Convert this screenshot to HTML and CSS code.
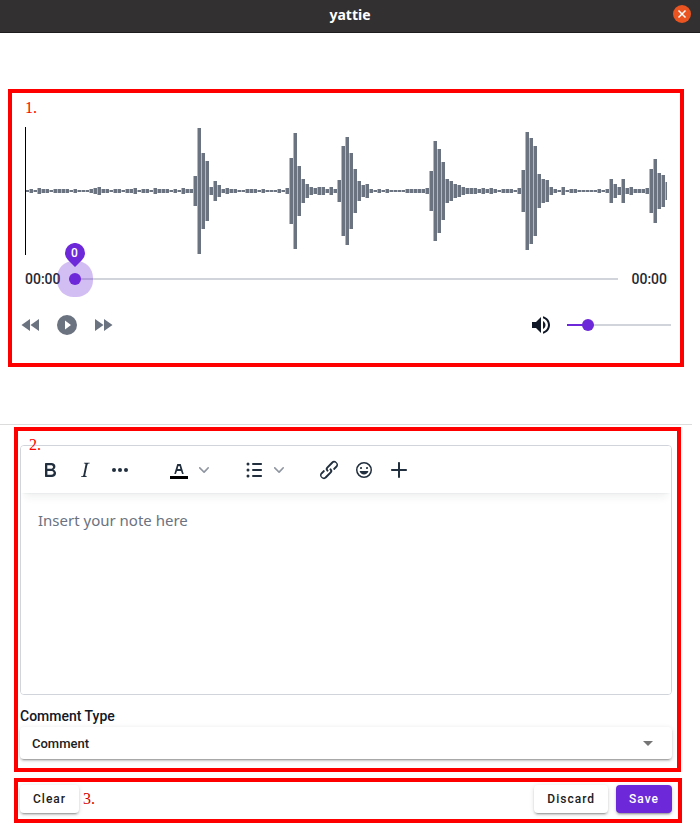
FILE: index.html
```html
<!DOCTYPE html>
<html lang="en">
<head>
<meta charset="utf-8">
<meta name="viewport" content="width=device-width, initial-scale=1">
<title>yattie</title>
<link rel="stylesheet" href="styles.css">
</head>
<body>
<header class="titlebar">
  <h1 class="titlebar-name">yattie</h1>
  <button class="titlebar-close" type="button" aria-label="Close window">
    <svg viewBox="0 0 18 18" width="18" height="18"><path d="M5.500 5.500l7 7M12.500 5.500l-7 7" fill="none" stroke="#fff" stroke-width="1.500"/></svg>
  </button>
</header>
<main class="content">
  <section class="region player" aria-label="Audio player">
    <div class="marker">1.</div>
    <svg class="wave" viewBox="0 0 642 128" preserveAspectRatio="none" aria-hidden="true"></svg>
    <div class="timeline">
      <span class="time">00:00</span>
      <div class="seek">
        <input class="range seek-range" id="seek" type="range" min="0" max="100" value="0" aria-label="Position">
        <output class="pin" for="seek">
          <svg class="pin-shape" viewBox="0 0 20 24" width="20" height="24" aria-hidden="true"><path d="M10 24L3 17.100A10 10 0 1 1 17 17.100Z"/></svg>
          <span class="pin-value">0</span>
        </output>
      </div>
      <span class="time">00:00</span>
    </div>
    <div class="controls">
      <button class="icon-button" type="button" aria-label="Rewind"><svg viewBox="0 0 24 24"><path d="M11.500 12L20 18V6M11 18V6L2.500 12L11 18Z"/></svg></button>
      <button class="icon-button" type="button" aria-label="Play"><svg viewBox="0 0 24 24"><path d="M10 16.500V7.500L16 12M12 2A10 10 0 0 0 2 12A10 10 0 0 0 12 22A10 10 0 0 0 22 12A10 10 0 0 0 12 2Z"/></svg></button>
      <button class="icon-button" type="button" aria-label="Fast forward"><svg viewBox="0 0 24 24"><path d="M13 6V18L21.500 12M4 18L12.500 12L4 6V18Z"/></svg></button>
      <div class="volume">
        <button class="icon-button icon-dark" type="button" aria-label="Mute"><svg viewBox="0 0 24 24"><path d="M14 3.230V5.290C16.890 6.150 19 8.830 19 12C19 15.170 16.890 17.840 14 18.700V20.770C18 19.860 21 16.280 21 12C21 7.720 18 4.140 14 3.230M16.500 12C16.500 10.230 15.500 8.710 14 7.970V16C15.500 15.290 16.500 13.760 16.500 12M3 9V15H7L12 20V4L7 9H3Z"/></svg></button>
        <input class="range volume-range" type="range" min="0" max="100" value="16" aria-label="Volume">
      </div>
    </div>
  </section>

  <hr class="divider">

  <section class="region note" aria-label="Note">
    <div class="marker marker-over">2.</div>
    <div class="editor">
      <div class="toolbar" role="toolbar" aria-label="Formatting">
        <div class="group">
          <button class="tool" type="button" aria-label="Bold"><svg viewBox="0 0 24 24"><path d="M7.800 19c-.3 0-.5 0-.6-.2l-.2-.5V5.700c0-.2 0-.4.2-.5l.6-.2h5c1.500 0 2.700.3 3.500 1 .7.6 1.100 1.400 1.100 2.500a3 3 0 0 1-.6 1.900c-.4.6-1 1-1.600 1.200.4.1.9.3 1.300.6s.8.7 1 1.200c.4.4.5 1 .5 1.600 0 1.300-.4 2.300-1.300 3-.8.7-2.100 1-3.800 1H7.800Zm5-8.300c.6 0 1.200-.1 1.600-.5.4-.3.6-.7.6-1.300 0-1.100-.8-1.700-2.300-1.700H9.300v3.500h3.400Zm.5 6c.7 0 1.300-.1 1.700-.4.4-.4.6-.9.6-1.500s-.2-1-.7-1.400c-.4-.3-1-.4-2-.4H9.400v3.800h4Z" fill-rule="evenodd"/></svg></button>
          <button class="tool" type="button" aria-label="Italic"><svg viewBox="0 0 24 24"><path d="m16.700 4.700-.1.900h-.3c-.6 0-1 0-1.400.3-.3.3-.4.6-.5 1.100l-2.100 9.800v.6c0 .5.4.8 1.400.8h.2l-.2.800H8l.2-.8h.2c1.100 0 1.800-.5 2-1.500l2-9.800.1-.5c0-.6-.4-.8-1.400-.8h-.3l.2-.9h5.700Z"/></svg></button>
          <button class="tool" type="button" aria-label="More"><svg viewBox="0 0 24 24"><circle cx="6" cy="12" r="2"/><circle cx="12" cy="12" r="2"/><circle cx="18" cy="12" r="2"/></svg></button>
        </div>
        <div class="group">
          <button class="tool" type="button" aria-label="Text color"><svg viewBox="0 0 24 24"><path d="M3 18h18v3H3z" fill="#000"/><path d="M8.700 16h-.8a.5.5 0 0 1-.5-.6l2.700-9c.1-.3.3-.4.5-.4h2.800c.2 0 .4.1.5.4l2.700 9a.5.5 0 0 1-.5.6h-.8a.5.5 0 0 1-.4-.4l-.7-2.200c0-.3-.3-.4-.5-.4h-3.400c-.2 0-.4.1-.5.4l-.7 2.200c0 .3-.2.4-.4.4Zm2.600-7.600-.6 2a.5.5 0 0 0 .5.6h1.600a.5.5 0 0 0 .5-.6l-.6-2c0-.3-.3-.4-.5-.4h-.4c-.2 0-.4.1-.5.4Z" fill-rule="evenodd"/></svg></button>
          <button class="tool-more" type="button" aria-label="Choose text color"><svg viewBox="0 0 10 10"><path d="M8.700 2.200c.3-.3.8-.3 1 0 .4.4.4.9 0 1.200L5.700 7.800c-.3.3-.9.3-1.200 0L.2 3.400a.8.8 0 0 1 0-1.200c.3-.3.8-.3 1.100 0L5 6l3.700-3.800Z"/></svg></button>
        </div>
        <div class="group">
          <button class="tool" type="button" aria-label="Bullet list"><svg viewBox="0 0 24 24"><path d="M11 5h8c.6 0 1 .4 1 1s-.4 1-1 1h-8a1 1 0 0 1 0-2Zm0 6h8c.6 0 1 .4 1 1s-.4 1-1 1h-8a1 1 0 0 1 0-2Zm0 6h8c.6 0 1 .4 1 1s-.4 1-1 1h-8a1 1 0 0 1 0-2Z"/><circle cx="6" cy="6" r="1.500"/><circle cx="6" cy="12" r="1.500"/><circle cx="6" cy="18" r="1.500"/></svg></button>
          <button class="tool-more" type="button" aria-label="Choose list style"><svg viewBox="0 0 10 10"><path d="M8.700 2.200c.3-.3.8-.3 1 0 .4.4.4.9 0 1.200L5.700 7.800c-.3.3-.9.3-1.200 0L.2 3.400a.8.8 0 0 1 0-1.200c.3-.3.8-.3 1.100 0L5 6l3.700-3.800Z"/></svg></button>
        </div>
        <div class="group">
          <button class="tool" type="button" aria-label="Link"><svg viewBox="0 0 24 24"><path d="M6.200 12.300a1 1 0 0 1 1.400 1.400l-2 2a2 2 0 1 0 2.600 2.800l4.800-4.800a1 1 0 0 0 0-1.400 1 1 0 1 1 1.400-1.300 2.900 2.900 0 0 1 0 4L9.600 20a3.900 3.900 0 0 1-5.500-5.500l2-2Zm11.600-.6a1 1 0 0 1-1.400-1.400l2-2a2 2 0 1 0-2.600-2.800L11 10.300a1 1 0 0 0 0 1.400A1 1 0 1 1 9.600 13a2.900 2.900 0 0 1 0-4L14.400 4a3.900 3.900 0 0 1 5.500 5.500l-2 2Z"/></svg></button>
          <button class="tool" type="button" aria-label="Emoji"><svg viewBox="0 0 24 24"><path d="M9 11c.6 0 1-.4 1-1s-.4-1-1-1a1 1 0 0 0-1 1c0 .6.4 1 1 1Zm6 0c.6 0 1-.4 1-1s-.4-1-1-1a1 1 0 0 0-1 1c0 .6.4 1 1 1Zm-3 5.500c2.100 0 4-1.500 4.400-3.500H7.600c.5 2 2.300 3.500 4.400 3.500ZM12 4a8 8 0 1 0 0 16 8 8 0 0 0 0-16Zm0 14.500a6.500 6.500 0 1 1 0-13 6.500 6.500 0 0 1 0 13Z" fill-rule="evenodd"/></svg></button>
          <button class="tool" type="button" aria-label="Insert"><svg viewBox="0 0 24 24"><path d="M12 4c.5 0 1 .4 1 .9V11h6a1 1 0 0 1 .1 2H13v6a1 1 0 0 1-2 .1V13H5a1 1 0 0 1-.1-2H11V5c0-.6.4-1 1-1Z"/></svg></button>
        </div>
      </div>
      <textarea class="editor-text" aria-label="Note" placeholder="Insert your note here"></textarea>
    </div>
    <label class="field-label" for="comment-type">Comment Type</label>
    <div class="select-wrap">
      <select class="select" id="comment-type"><option>Comment</option></select>
      <svg class="select-arrow" viewBox="0 0 24 24" width="24" height="24" aria-hidden="true"><path d="M7 10l5 5 5-5z"/></svg>
    </div>
  </section>

  <section class="region actions" aria-label="Actions">
    <button class="button" type="button">Clear</button>
    <div class="marker marker-dark">3.</div>
    <div class="actions-end">
      <button class="button" type="button">Discard</button>
      <button class="button button-primary" type="button">Save</button>
    </div>
  </section>
</main>
<script src="script.js"></script>
</body>
</html>
```
FILE: styles.css
```css
* {
  box-sizing: border-box;
}

body {
  margin: 0;
  background: #fff;
  color: #1f2937;
  font-family: Roboto, "Liberation Sans", sans-serif;
  font-size: 14px;
}

button {
  padding: 0;
  border: 0;
  background: none;
  font-family: inherit;
  cursor: pointer;
}

svg {
  display: block;
}

/* Window title bar */
.titlebar {
  display: grid;
  grid-template-columns: 1fr auto 1fr;
  align-items: start;
  height: 33px;
  padding: 5px 9px 0;
  border-bottom: 1px solid #1e1c1c;
  background: #333031;
}

.titlebar-name {
  grid-column: 2;
  margin: 0;
  color: #fff;
  font: bold 14px/20px "Noto Sans", "Open Sans", sans-serif;
}

.titlebar-close {
  justify-self: end;
  width: 18px;
  height: 18px;
  border-radius: 50%;
  background: #e95420;
}

.content {
  padding-right: 8px;
}

/* Outlined regions and their numbers */
.region {
  position: relative;
  border: 4px solid #f00;
}

.marker {
  color: #f00;
  font: 16px/20px "Liberation Serif", serif;
}

.marker-over {
  position: absolute;
  top: 4px;
  left: 11px;
  z-index: 1;
}

.marker-dark {
  color: #d40000;
}

/* Player */
.player {
  margin: 56px 8px 57px;
  padding: 5px 9px 26px 7px;
}

.player .marker {
  margin-left: 6px;
}

.wave {
  width: calc(100% - 10px);
  height: 128px;
  margin: 9px 0 12px 6px;
}

.wave-edge {
  fill: #b4b9c0;
}

.wave-bar {
  fill: #6b7280;
}

.timeline {
  display: flex;
  align-items: center;
  height: 24px;
  margin: 0 4px 22px 6px;
}

.time {
  font-size: 14px;
  font-weight: 500;
  line-height: 24px;
}

.seek {
  position: relative;
  flex: 1;
  height: 24px;
  margin: 0 13px 0 8px;
}

.range {
  display: block;
  height: 24px;
  margin: 0;
  appearance: none;
  background: none;
}

.range::-webkit-slider-runnable-track {
  height: 2px;
  background: #d1d5db;
}

.range::-webkit-slider-thumb {
  width: 12px;
  height: 12px;
  margin-top: -5px;
  border-radius: 50%;
  appearance: none;
  background: #6d28d9;
}

.seek-range {
  width: 100%;
}

.seek-range::-webkit-slider-thumb {
  box-shadow: 0 0 0 12px rgba(109, 40, 217, 0.3);
}

.pin {
  position: absolute;
  top: -24px;
  left: -4px;
  width: 20px;
  height: 24px;
}

.pin-shape {
  fill: #6d28d9;
}

.pin-value {
  position: absolute;
  inset: 0;
  color: #fff;
  font-size: 12px;
  font-weight: 500;
  line-height: 20px;
  text-align: center;
}

.controls {
  display: flex;
  align-items: center;
  gap: 12px;
}

.icon-button {
  width: 24px;
  height: 24px;
  fill: #6b7280;
}

.icon-dark {
  fill: #111827;
}

.volume {
  display: flex;
  align-items: center;
  gap: 14px;
  margin-left: auto;
}

.volume-range {
  width: 104px;
}

.volume-range::-webkit-slider-runnable-track {
  background: linear-gradient(to right, #6d28d9 20%, #d1d5db 20%);
}

.divider {
  height: 1px;
  margin: 0 0 2px;
  border: 0;
  background: #dcdcdc;
}

/* Note editor */
.note {
  margin: 0 11px 6px 14px;
  padding: 14px 5px 9px 2px;
}

.editor {
  border: 1px solid #d1d5db;
  border-radius: 4px;
  overflow: hidden;
}

.toolbar {
  position: relative;
  display: flex;
  align-items: center;
  gap: 24px;
  height: 47px;
  padding: 0 11px;
  background: #fff;
  box-shadow: 0 2px 2px -2px rgba(34, 47, 62, 0.1), 0 8px 8px -4px rgba(34, 47, 62, 0.07);
}

.group {
  display: flex;
}

.tool {
  display: grid;
  place-items: center;
  width: 35px;
  height: 28px;
  fill: #222f3e;
}

.tool svg {
  width: 24px;
  height: 24px;
}

.tool-more {
  display: grid;
  place-items: center;
  width: 16px;
  height: 28px;
  fill: #9096a0;
}

.tool-more svg {
  width: 10px;
  height: 10px;
}

.editor-text {
  display: block;
  width: 100%;
  height: 201px;
  padding: 15px 17px;
  border: 0;
  outline: 0;
  resize: none;
  color: #1f2937;
  font: 15px/24px "Noto Sans", "Open Sans", sans-serif;
}

.editor-text::placeholder {
  color: #6b7280;
}

.field-label {
  display: block;
  margin-top: 10px;
  color: #111827;
  font-weight: 500;
  line-height: 22px;
}

.select-wrap {
  position: relative;
}

.select {
  display: block;
  width: 100%;
  height: 32px;
  padding: 0 12px;
  border: 0;
  border-radius: 4px;
  appearance: none;
  background: #fff;
  box-shadow: 0 3px 1px -2px rgba(0, 0, 0, 0.2), 0 2px 2px rgba(0, 0, 0, 0.14), 0 1px 5px rgba(0, 0, 0, 0.12);
  color: #212121;
  font: 500 13px Roboto, "Liberation Sans", sans-serif;
}

.select-arrow {
  position: absolute;
  top: 4px;
  right: 12px;
  fill: #757575;
  pointer-events: none;
}

/* Bottom actions */
.actions {
  display: flex;
  align-items: center;
  gap: 4px;
  margin: 0 10px 8px 14px;
  padding: 3px 6px 6px 2px;
}

.actions-end {
  display: flex;
  gap: 8px;
  margin-left: auto;
}

.button {
  height: 28px;
  padding: 0 13px;
  border-radius: 4px;
  background: #fff;
  box-shadow: 0 3px 1px -2px rgba(0, 0, 0, 0.2), 0 2px 2px rgba(0, 0, 0, 0.14), 0 1px 5px rgba(0, 0, 0, 0.12);
  color: #212121;
  font-size: 12px;
  font-weight: 500;
  letter-spacing: 1px;
}

.button-primary {
  background: #6d28d9;
  color: #fff;
}
```
FILE: script.js
```js
// Bar heights of the waveform, one for every 4 units of width.
const heights = [
  2, 4, 2, 6, 4, 4, 2, 4, 4, 4, 4, 2, 4, 2, 2, 2, 4, 6, 8, 4,
  4, 2, 4, 4, 2, 4, 4, 6, 2, 4, 4, 2, 6, 4, 4, 4, 2, 4, 2, 6,
  4, 4, 30, 126, 76, 60, 8, 20, 12, 4, 6, 4, 4, 2, 2, 4, 4, 4, 2, 4,
  2, 2, 2, 4, 2, 6, 66, 116, 50, 24, 14, 8, 6, 8, 8, 4, 8, 4, 22, 90,
  108, 76, 44, 20, 12, 14, 4, 2, 4, 2, 4, 2, 2, 2, 2, 4, 4, 4, 4, 4,
  6, 40, 100, 84, 58, 24, 20, 14, 12, 8, 6, 6, 6, 4, 6, 4, 6, 4, 2, 4,
  4, 4, 2, 6, 42, 118, 106, 90, 34, 24, 22, 8, 4, 2, 8, 2, 4, 4, 2, 2,
  2, 2, 2, 4, 2, 4, 24, 14, 8, 24, 6, 8, 4, 4, 4, 6, 44, 64, 36, 32,
  18
];

const wave = document.querySelector(".wave");

function addRect(x, y, width, height, className) {
  const rect = document.createElementNS("http://www.w3.org/2000/svg", "rect");
  rect.setAttribute("x", x);
  rect.setAttribute("y", y);
  rect.setAttribute("width", width);
  rect.setAttribute("height", height);
  if (className) rect.setAttribute("class", className);
  wave.append(rect);
}

heights.forEach((height, i) => {
  const top = 64 - height / 2;
  addRect(i * 4, top, 1, height, "wave-edge");
  addRect(i * 4 + 1, top, 3, height, "wave-bar");
});

// Playback cursor
addRect(0, 0, 1, 128);
```
